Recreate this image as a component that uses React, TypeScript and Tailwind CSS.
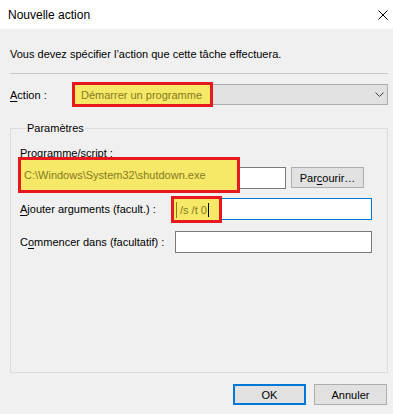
import type { ReactNode } from 'react';

// ─── Small pieces ─────────────────────────────────────────────────────────────

// Access-key letter, underlined like a Win32 dialog label
function Key({ children }: { children: ReactNode }) {
  return <span className="underline underline-offset-2">{children}</span>;
}

// Yellow highlighter box with a red frame, laid over a field
function Highlight({ className, children }: { className: string; children: ReactNode }) {
  return (
    <div
      className={
        'absolute flex items-center whitespace-nowrap border-[3px] border-[#e5191e] bg-[#f6e967] text-[#857922] ' +
        className
      }
    >
      {children}
    </div>
  );
}

function Button({ children, focused = false }: { children: ReactNode; focused?: boolean }) {
  return (
    <button
      type="button"
      className={
        'flex h-[21px] w-[73px] items-center justify-center whitespace-nowrap bg-[#e1e1e1] text-[#000] ' +
        (focused ? 'border-2 border-[#0078d7]' : 'border border-[#adadad]')
      }
    >
      {children}
    </button>
  );
}

// ─── Dialog ───────────────────────────────────────────────────────────────────

export default function App() {
  return (
    <div
      className="flex h-[414px] w-[393px] flex-col whitespace-nowrap bg-[#f0f0f0] text-[11px] leading-4 text-black"
      style={{ fontFamily: '"Liberation Sans", Arial, sans-serif' }}
    >
      {/* Title bar */}
      <div className="flex h-[29px] shrink-0 items-center bg-white pl-2 pr-[5px]">
        <span className="text-[12px]">Nouvelle action</span>
        <svg className="ml-auto" width="10" height="10" viewBox="0 0 10 10">
          <path d="M0.5 0.5 L9.5 9.5 M9.5 0.5 L0.5 9.5" stroke="#000" strokeWidth="1" fill="none" />
        </svg>
      </div>

      {/* Body */}
      <div className="flex flex-1 flex-col pl-[10px] pr-[5px]">
        <p className="pt-[17px]">Vous devez spécifier l’action que cette tâche effectuera.</p>

        <div className="mt-[11px] h-px bg-[#c9c9c9]" />

        {/* Action combo */}
        <div className="mt-[10px] flex items-center">
          <span className="w-[62px]">
            <Key>A</Key>ction :
          </span>
          <div className="relative flex h-[21px] flex-1 items-center border border-[#adadad] bg-[#e1e1e1] pr-[3px]">
            <Highlight className="-left-[1px] -top-[3px] h-[25px] w-[141px] pl-[6px]">Démarrer un programme</Highlight>
            <svg className="ml-auto" width="9" height="5" viewBox="0 0 9 5">
              <path d="M0.5 0.5 L4.5 4.5 L8.5 0.5" stroke="#3c3c3c" fill="none" />
            </svg>
          </div>
        </div>

        {/* Paramètres group */}
        <fieldset className="mt-[15px] h-[253px] border border-[#dcdcdc] pl-[9px] pr-[15px]">
          <legend className="ml-[6px] px-[1px]">Paramètres</legend>

          <div className="mt-[9px]">Programme/script :</div>
          <div className="mt-[6px] flex">
            <div className="relative h-[22px] w-[266px] border border-[#7a7a7a] bg-white">
              <Highlight className="-left-[3px] -top-[11px] h-[36px] w-[222px] pl-[3px]">
                C:\Windows\System32\shutdown.exe
              </Highlight>
            </div>
            <div className="ml-[5px]">
              <Button>
                Par<Key>c</Key>ourir…
              </Button>
            </div>
          </div>

          <div className="mt-[9px] flex items-center">
            <span className="w-[155px]">
              <Key>A</Key>jouter arguments (facult.) :
            </span>
            <div className="relative h-[22px] flex-1 border border-[#0078d7] bg-white">
              <Highlight className="-left-[5px] -top-[3px] h-[27px] w-[51px] pl-[2px]">
                <span className="border-l border-[#857922] pl-[3px]">/s /t 0</span>
                <span className="ml-[1px] h-[14px] w-px bg-black" />
              </Highlight>
            </div>
          </div>

          <div className="mt-[11px] flex items-center">
            <span className="w-[155px]">
              C<Key>o</Key>mmencer dans (facultatif) :
            </span>
            <div className="h-[22px] flex-1 border border-[#7a7a7a] bg-white" />
          </div>
        </fieldset>

        {/* Footer buttons */}
        <div className="mt-[11px] flex justify-end gap-[8px] pr-px">
          <Button focused>OK</Button>
          <Button>Annuler</Button>
        </div>
      </div>
    </div>
  );
}
